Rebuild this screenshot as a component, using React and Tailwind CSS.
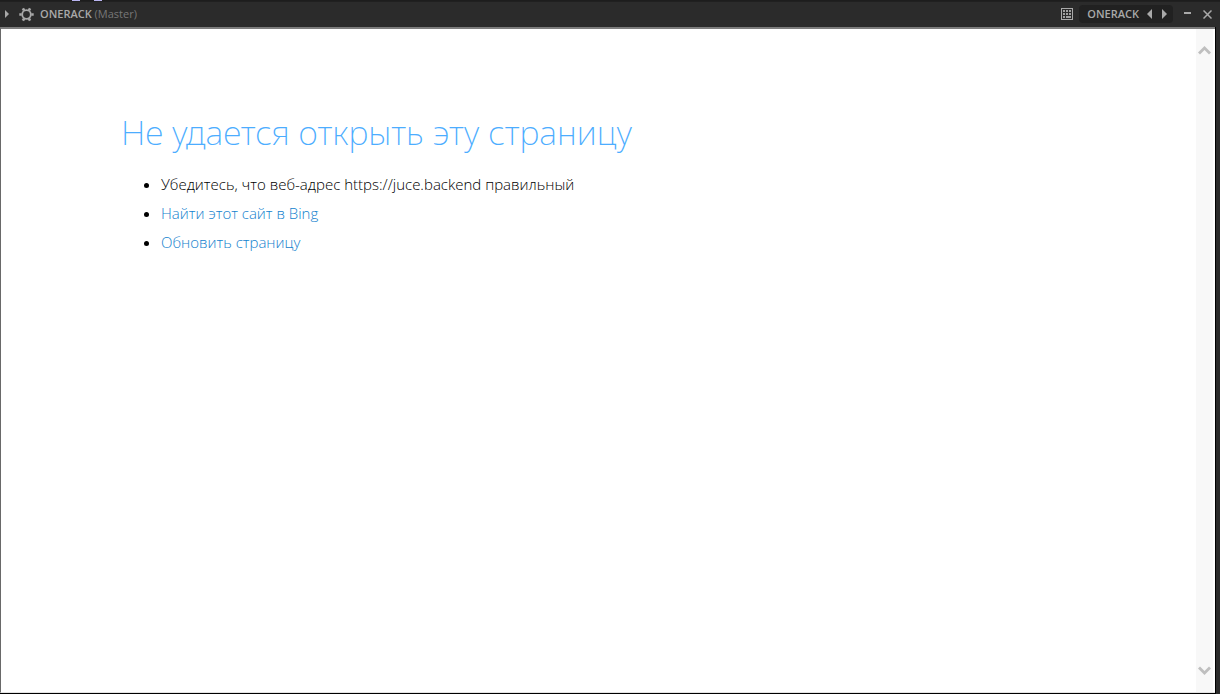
// ============================================
// Plugin Window
// ============================================
// Host window for the ONERACK plugin.
// Shows:
//   - Title bar with preset switcher
//   - Embedded browser page (load error)
//   - Browser scroll bar
// ============================================

import React from 'react';

const GearIcon = () => (
  <svg width="15" height="15" viewBox="0 0 15 15" fill="none" stroke="#a9a9a9">
    <circle cx="7.5" cy="7.5" r="4.3" strokeWidth="1.8" />
    <path
      d="M12.3 7.5h2.4M9.9 11.6l1.2 2.1M5.1 11.6l-1.2 2.1M2.7 7.5H.3M5.1 3.4L3.9 1.3M9.9 3.4l1.2-2.1"
      strokeWidth="2.6"
    />
  </svg>
);

const GridIcon = () => (
  <svg width="12" height="12" viewBox="0 0 12 12" shapeRendering="crispEdges">
    <rect x="0.5" y="0.5" width="11" height="11" fill="none" stroke="#a9a9a9" />
    <path
      d="M2 2h2v2H2zM5 2h2v2H5zM8 2h2v2H8zM2 5h2v2H2zM5 5h2v2H5zM8 5h2v2H8zM2 8h2v2H2zM5 8h5v2H5z"
      fill="#a0a0a0"
    />
  </svg>
);

const Chevron = ({ down }) => (
  <svg width="13" height="10" viewBox="0 0 13 10" fill="none" stroke="#bfbfbf" strokeWidth="2.8">
    <path d={down ? 'M1 1.5l5.5 5.5L12 1.5' : 'M1 8.5L6.500 3L12 8.5'} />
  </svg>
);

const TitleBar = () => (
  <header className="bg-[#2b2b2b] text-[#a9a9a9]">
    {/* Edge of the channel strip behind the window */}
    <div className="flex h-px gap-3.5 bg-[#1d1d1d] pl-[72px]">
      <span className="w-2 bg-[#b9b4f0]"></span>
      <span className="w-2 bg-[#b9b4f0]"></span>
    </div>

    <div className="flex h-[26px] items-center border-t border-[#202020] pb-px pl-[5px] pr-2 text-[11px] leading-4">
      <button aria-label="Expand" className="mr-2.5">
        <svg width="4" height="8" viewBox="0 0 4 8" fill="#a9a9a9">
          <path d="M0 0l4 4-4 4z" />
        </svg>
      </button>
      <button aria-label="Settings" className="mr-1.5">
        <GearIcon />
      </button>
      <h2 className="font-semibold">
        ONERACK <span className="font-normal text-[#777777]">(Master)</span>
      </h2>

      <div className="ml-auto flex items-center">
        <button aria-label="Browse presets" className="mr-1.5">
          <GridIcon />
        </button>
        <div className="flex h-[18px] items-center rounded bg-[#212121] pl-2 pr-1.5">
          <span className="mr-2 font-semibold">ONERACK</span>
          <button aria-label="Previous preset" className="mr-2.5">
            <svg width="5" height="10" viewBox="0 0 5 10" fill="#a9a9a9">
              <path d="M5 0v10L0 5z" />
            </svg>
          </button>
          <button aria-label="Next preset">
            <svg width="5" height="10" viewBox="0 0 5 10" fill="#a9a9a9">
              <path d="M0 0l5 5-5 5z" />
            </svg>
          </button>
        </div>
        <button aria-label="Minimize" className="mx-[11px]">
          <svg width="8" height="9" viewBox="0 0 8 9" fill="#a9a9a9">
            <path d="M0 2h7v2H0z" />
          </svg>
        </button>
        <button aria-label="Close">
          <svg width="9" height="9" viewBox="0 0 9 9" stroke="#a9a9a9" strokeWidth="1.5">
            <path d="M.5.5l8 8M8.500.5l-8 8" />
          </svg>
        </button>
      </div>
    </div>
  </header>
);

const ErrorPage = () => (
  <main className="flex-1 pl-[120px] pt-[77px] font-light">
    <h1 className="mb-3 font-['Noto_Sans',sans-serif] text-[34px] font-extralight leading-[52px] text-[#4cadff]">
      Не удается открыть эту страницу
    </h1>
    <ul className="list-disc pl-10 text-[15px] leading-[29px] text-black">
      <li>Убедитесь, что веб-адрес https://juce.backend правильный</li>
      <li>
        <a href="#bing" className="text-[#1382ce]">Найти этот сайт в Bing</a>
      </li>
      <li>
        <a href="#refresh" className="text-[#1382ce]">Обновить страницу</a>
      </li>
    </ul>
  </main>
);

const ScrollBar = () => (
  <div className="mr-0.5 flex w-[17px] flex-col items-center justify-between bg-[#f8f8f8] pb-4 pt-4">
    <button aria-label="Scroll up">
      <Chevron />
    </button>
    <button aria-label="Scroll down">
      <Chevron down />
    </button>
  </div>
);

const App = () => {
  return (
    <div className="flex min-h-screen flex-col bg-[#2b2b2b] font-['Open_Sans','Noto_Sans',sans-serif]">
      <TitleBar />
      <div className="mr-1 flex flex-1 border-b border-r border-black">
        <div className="flex flex-1 border-b border-l border-t-2 border-b-[#e3e3e3] border-l-[#696969] border-t-[#7d7d7d] bg-white">
          <ErrorPage />
          <ScrollBar />
        </div>
      </div>
    </div>
  );
};

export default App;
